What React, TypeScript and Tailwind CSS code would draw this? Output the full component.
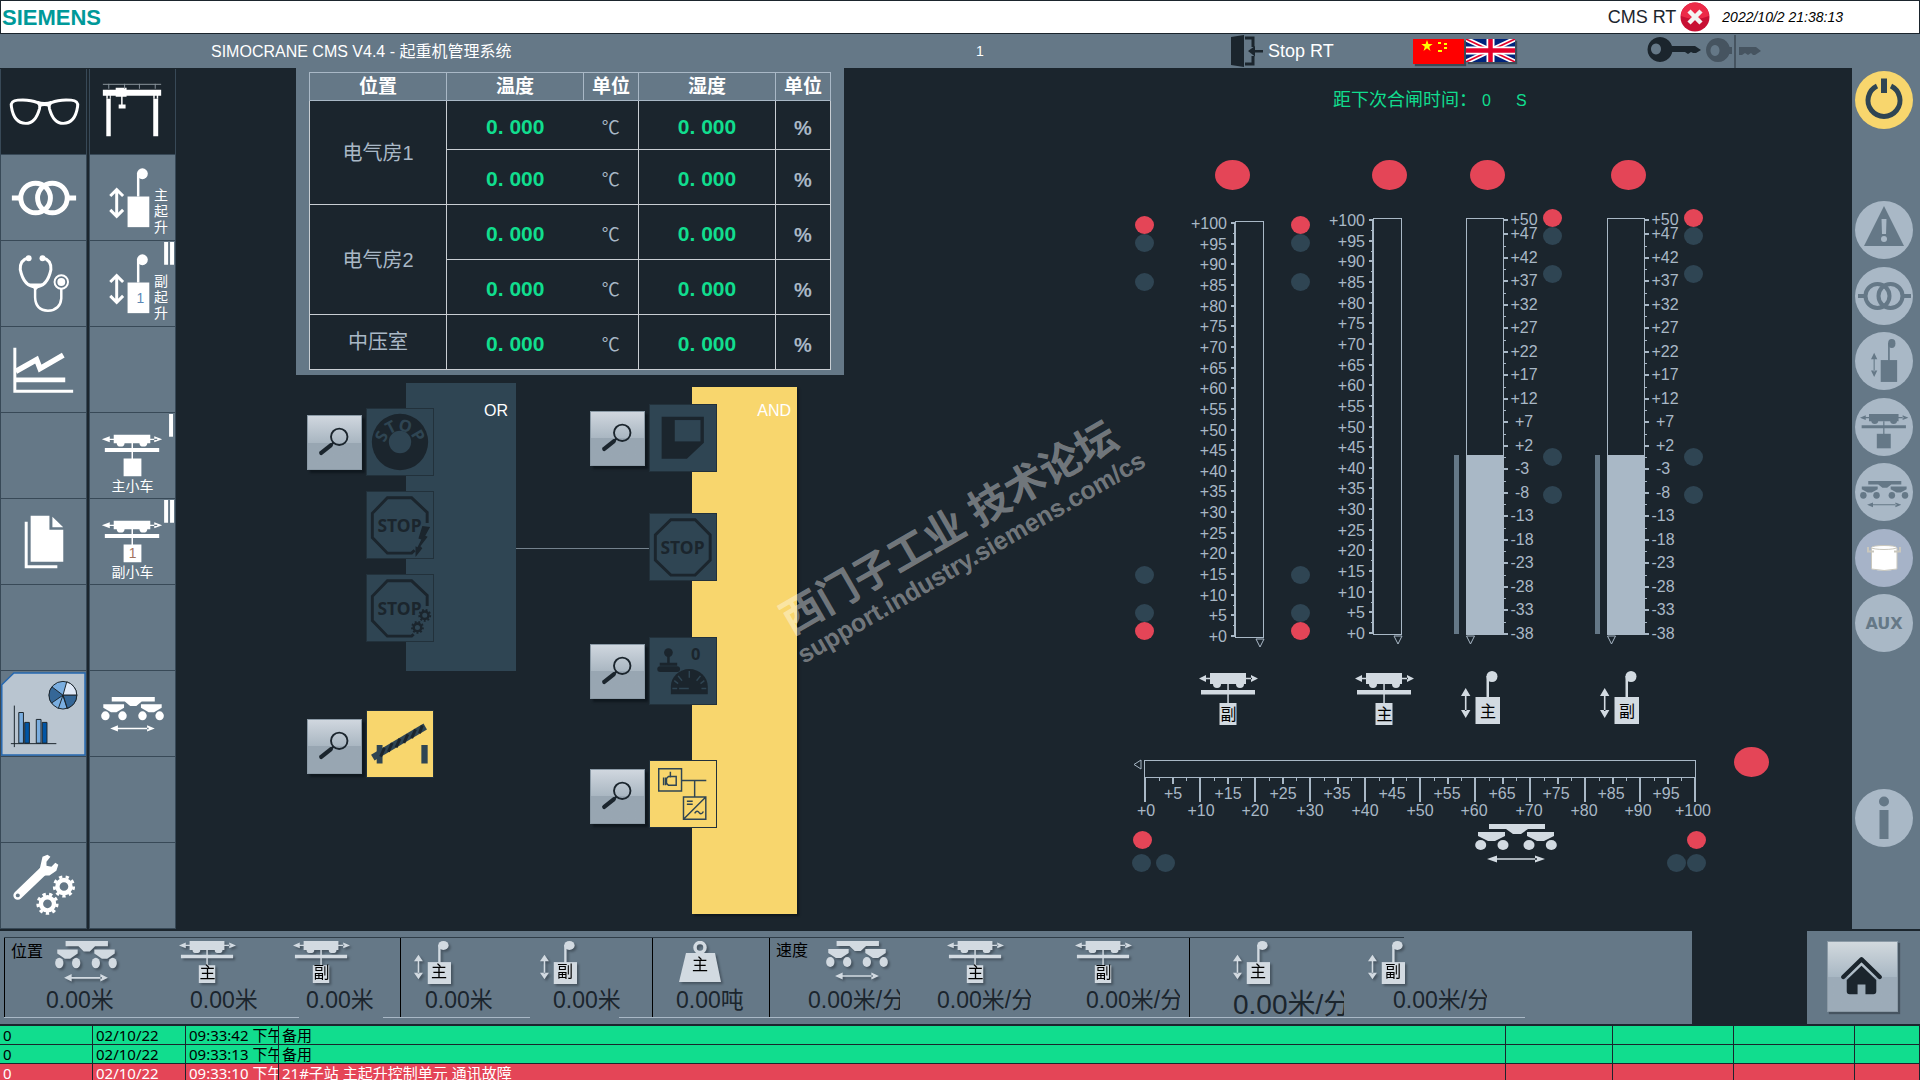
import React from "react";

const INK = "#1b252d";
const STEEL = "#657887";
const MIST = "#a9b8c6";
const PALE = "#d2dae1";
const SLATE = "#2f4553";

/* ---------- shared glyphs ---------- */

function Gear({ cx, cy, r, fill = "white" }: { cx: number; cy: number; r: number; fill?: string }) {
  return (
    <g fill="none" stroke={fill}>
      <circle cx={cx} cy={cy} r={r * 0.6} strokeWidth={r * 0.4} />
      <circle cx={cx} cy={cy} r={r * 0.88} strokeWidth={r * 0.28} pathLength={18} strokeDasharray="1 1" />
    </g>
  );
}

function TrolleyShape({ color }: { color: string }) {
  return (
    <g fill={color}>
      <path d="M11 0H47V11H11Z" />
      <circle cx="18" cy="11" r="4" />
      <circle cx="41" cy="11" r="4" />
      <path d="M0 5.5L7 2V9ZM59 5.5L52 2V9ZM6 4.7H53V6.3H6Z" />
      <path d="M2 17H56V21.5H2Z" />
      <path d="M28.3 11H29.8V31H28.3Z" />
      <path d="M20.5 30H37.5V52H20.5Z" />
    </g>
  );
}

function HoistShape({ color }: { color: string }) {
  return (
    <g fill={color}>
      <circle cx="31" cy="5.5" r="5.5" />
      <path d="M25.5 5H28V27H25.5Z" />
      <path d="M14.5 26H39V53H14.5Z" />
      <path d="M4.7 17L9.4 25H0ZM4.7 47L9.4 39H0ZM3.9 24H5.5V40H3.9Z" />
    </g>
  );
}

function GantryShape({ color }: { color: string }) {
  return (
    <g fill={color}>
      <path d="M14 0H70V5H53L46 10H38L31 5H14Z" />
      <path d="M3 8H30V12L20 17H13L3 12Z" />
      <path d="M52 8H79V12L69 17H62L52 12Z" />
      <ellipse cx="5.7" cy="21" rx="5.5" ry="5" />
      <ellipse cx="28" cy="21" rx="5.5" ry="5" />
      <ellipse cx="54" cy="21" rx="5.5" ry="5" />
      <ellipse cx="76.3" cy="21" rx="5.5" ry="5" />
      <path d="M12 35L22 31.5V38.5ZM70 35L60 31.5V38.5ZM20 34.2H62V35.8H20Z" />
    </g>
  );
}

type IconProps = { className: string; color?: string; mark?: string };

function Trolley({ className, color = PALE, mark }: IconProps) {
  return (
    <div className={`relative ${className}`}>
      <svg viewBox="0 0 59 52" preserveAspectRatio="none" className="block h-full w-full">
        <TrolleyShape color={color} />
      </svg>
      <span className="absolute inset-x-0 bottom-0 text-center text-base/5 text-black">{mark}</span>
    </div>
  );
}

function Hoist({ className, color = PALE, mark }: IconProps) {
  return (
    <div className={`relative ${className}`}>
      <svg viewBox="0 0 39 53" preserveAspectRatio="none" className="block h-full w-full">
        <HoistShape color={color} />
      </svg>
      <span className="absolute right-1 bottom-0.5 text-base/5 text-black">{mark}</span>
    </div>
  );
}

function Gantry({ className, color = PALE }: IconProps) {
  return (
    <svg viewBox="0 0 82 39" preserveAspectRatio="none" className={`block ${className}`}>
      <GantryShape color={color} />
    </svg>
  );
}

/* ---------- header ---------- */

function CloseBadge() {
  return (
    <svg viewBox="0 0 30 30" className="h-[30px] w-[30px]">
      <circle cx="15" cy="15" r="14.5" fill="#c80f33" />
      <path d="M1 14A14 13.5 0 0 1 29 14Q15 20 1 14Z" fill="#ec2a48" />
      <path d="M9 9L21 21M21 9L9 21" stroke="#f3f3f3" strokeWidth="4.5" />
    </svg>
  );
}

function Flags() {
  const star = "M0 -6L1.4 -1.9H5.7L2.2 .7L3.5 4.9L0 2.3L-3.5 4.9L-2.2 .7L-5.7 -1.9H-1.4Z";
  return (
    <>
      <button type="button" aria-label="中文" className="shadow-[2px_2px_1px_#3c4a56]">
        <svg viewBox="0 0 51 25" className="block h-[25px] w-[51px]">
          <rect width="51" height="25" fill="#ff0000" />
          <g fill="#ffff00">
            <path d={star} transform="translate(14 7)" />
            <rect x="25" y="3" width="3" height="2" />
            <rect x="31" y="4" width="3" height="2" />
            <rect x="31" y="8" width="3" height="2" />
            <rect x="25" y="11" width="4" height="2" />
          </g>
        </svg>
      </button>
      <button type="button" aria-label="English" className="ml-0.5 shadow-[2px_2px_1px_#3c4a56]">
        <svg viewBox="0 0 49 23" className="block h-[23px] w-[49px]">
          <rect width="49" height="23" fill="#00247d" />
          <path d="M0 0L49 23M49 0L0 23" stroke="white" strokeWidth="5" />
          <path d="M0 0L49 23M49 0L0 23" stroke="#e4002b" strokeWidth="1.6" />
          <path d="M24.5 0V23M0 11.5H49" stroke="white" strokeWidth="8" />
          <path d="M24.5 0V23M0 11.5H49" stroke="#e4002b" strokeWidth="4.5" />
        </svg>
      </button>
    </>
  );
}

function Keys() {
  return (
    <svg viewBox="0 0 116 34" className="h-[34px] w-[116px]">
      <g fill={INK}>
        <path fillRule="evenodd" d="M13 3a12.5 12.5 0 1 0 .01 0ZM9 9.5a5 5.5 0 1 1 -.01 0Z" />
        <path d="M22 12H48L54 16L49 19H46L44 18L41 20L38 18H22Z" />
      </g>
      <g fill="#465460">
        <path fillRule="evenodd" d="M71 4a12 12 0 1 0 .01 0ZM68 11a4.5 5.5 0 1 1 -.01 0Z" />
        <path d="M80 13H85V20H80ZM92 13H109L114 17L108 21H106L104 19L101 21L98 19L95 21H92Z" />
        <path d="M87 1H89V34H87Z" />
      </g>
    </svg>
  );
}

function Header() {
  return (
    <header className="shrink-0">
      <div className="flex h-[34px] items-center justify-between border border-[#1b252d] bg-white pr-[74px] pl-px">
        <h1 className="pt-0.5 text-[22px] leading-none font-bold text-[#009999]">SIEMENS</h1>
        <div className="flex items-center text-[#1b252d]">
          <span className="text-lg">CMS RT</span>
          <span className="ml-1">
            <CloseBadge />
          </span>
          <time className="mr-0.5 ml-3 text-sm text-black italic">2022/10/2 21:38:13</time>
        </div>
      </div>
      <div className="flex h-[34px] items-center bg-[#657887] pl-[211px] text-white">
        <h2 className="w-[765px] pt-0.5 text-base">SIMOCRANE CMS V4.4 - 起重机管理系统</h2>
        <span className="w-[255px] text-sm">1</span>
        <button type="button" className="flex w-[182px] items-center gap-[5px] text-lg">
          <svg viewBox="0 0 32 32" className="h-8 w-8">
            <path d="M0 2L13 0V32L0 30Z" fill={INK} />
            <path d="M14 3H22V12M22 21V29H14" fill="none" stroke={INK} strokeWidth="3" />
            <path d="M17 16L24 11V15H32V17.5H24V21.5Z" fill={INK} />
          </svg>
          Stop RT
        </button>
        <div className="flex w-[234px] items-start">
          <Flags />
        </div>
        <Keys />
      </div>
    </header>
  );
}

/* ---------- left navigation ---------- */

function Cell({ children, label, className = "bg-[#657887]" }: { children?: React.ReactNode; label: string; className?: string }) {
  return (
    <button type="button" aria-label={label} className={`relative block h-[86px] w-full border border-t-0 border-[#384957] ${className}`}>
      {children}
    </button>
  );
}

function Art({ children }: { children: React.ReactNode }) {
  return (
    <svg viewBox="0 0 86 86" className="absolute inset-0 h-full w-full">
      {children}
    </svg>
  );
}

function RingPair({ color }: { color: string }) {
  return (
    <g fill="none" stroke={color} strokeWidth="5">
      <circle cx="35" cy="43.5" r="15" />
      <circle cx="52" cy="43.5" r="15" />
      <path d="M11 43.5H19M68 43.5H76" />
    </g>
  );
}

function NavHoist({ text, second }: { text: string; second?: boolean }) {
  return (
    <Cell label={text}>
      <Art>
        <g fill="white">
          <circle cx="53" cy="19" r="5.5" />
          <path d="M47.5 18H50V42H47.5Z" />
          <path d="M38 42H60V73H38Z" />
          {second && <path d="M75 1H79V24H75ZM81 1H85V24H81Z" />}
        </g>
        <path d="M27 36V60M20.5 41.5L27 35L33.5 41.500M20.5 55.500L27 62L33.5 55.500" fill="none" stroke="white" strokeWidth="3" />
        {second && (
          <text x="51" y="63" textAnchor="middle" fontSize="14" fill="#5b87b5">
            1
          </text>
        )}
      </Art>
      <span className="absolute top-8 right-1.5 w-4 text-sm/4 text-white">{text}</span>
    </Cell>
  );
}

function NavTrolley({ text, second }: { text: string; second?: boolean }) {
  return (
    <Cell label={text}>
      <Art>
        <g fill="white">
          <path d="M24 22H61V30.5H24Z" />
          <circle cx="31" cy="30" r="4" />
          <circle cx="54" cy="30" r="4" />
          <path d="M12 26.5L20 23.5V29.500ZM73 26.5L65 23.5V29.500ZM18 26H68V27.200H18Z" />
          <path d="M15 35.5H70V39.5H15ZM42 30H43.5V47H42ZM34 46H52V64H34Z" />
          <path d={second ? "M75 1H79V24H75ZM81 1H85V24H81Z" : "M80 1H84V24H80Z"} />
        </g>
        {second && (
          <text x="43" y="60" textAnchor="middle" fontSize="14" fill="#a0725c">
            1
          </text>
        )}
      </Art>
      <span className="absolute inset-x-0 bottom-0.5 text-center text-sm/5 text-white">{text}</span>
    </Cell>
  );
}

function LeftNav() {
  return (
    <nav className="flex shrink-0 gap-0.5 pt-px">
      <div className="w-[87px]">
        <Cell label="监视" className="bg-[#1b252d]">
          <Art>
            <g fill="none" stroke="white" strokeWidth="3">
              <path d="M10.5 38Q9.5 32 17 31.5Q29 30.5 37 34Q40 35.5 39 40Q35 55 25 55Q13 55 10.5 38Z" />
              <path d="M77.5 38Q78.5 32 71 31.5Q59 30.5 51 34Q48 35.5 49 40Q53 55 63 55Q75 55 77.5 38Z" />
            </g>
            <path d="M37 32Q44 35 51 32L49 39Q44 36 39 39Z" fill="white" />
          </Art>
        </Cell>
        <Cell label="电源">
          <Art>
            <RingPair color="white" />
          </Art>
        </Cell>
        <Cell label="诊断">
          <Art>
            <g fill="none" stroke="white">
              <path d="M28 17Q19 19 19.5 29Q23 46 35 46.5Q47 46 50.5 29Q51 19 42 17" strokeWidth="3" />
              <path d="M34.5 47V57Q35 70 47.5 70.5Q60 70 61 58V48" strokeWidth="2.5" />
              <circle cx="61" cy="41.5" r="6.800" strokeWidth="2" />
            </g>
            <g fill="white">
              <circle cx="61" cy="41.5" r="4" />
              <circle cx="28" cy="17.5" r="3" />
              <circle cx="42" cy="17.5" r="3" />
              <path d="M28 43H42L35 50Z" />
            </g>
          </Art>
        </Cell>
        <Cell label="趋势">
          <Art>
            <path d="M14 21V65H73" fill="none" stroke="white" strokeWidth="3" />
            <path d="M15 45L36 33L39.5 42L63 28.5" fill="none" stroke="white" strokeWidth="5.5" />
            <path d="M15 53.5H65" stroke="white" strokeWidth="5" />
          </Art>
        </Cell>
        <Cell label="空白" />
        <Cell label="文档">
          <Art>
            <path d="M30 17H49V31H63V63.5H30ZM52 18L63 28.5H52ZM24 23H27V67H57V70H24Z" fill="white" />
          </Art>
        </Cell>
        <Cell label="空白" />
        <Cell label="统计">
          <svg viewBox="0 0 86 86" className="absolute inset-0 h-full w-full">
            <path d="M0.8 14L13 2H85V85H.8Z" fill="#b9c5d0" stroke="#2668b0" strokeWidth="1.5" />
            <g stroke={INK} strokeWidth="1">
              <circle cx="62.700" cy="24.5" r="14" fill="#7aaee0" />
              <path d="M62.700 24.5L66.5 11A14 14 0 0 1 76.700 24.5Z" fill="#dfe9f7" />
              <path d="M62.700 24.5H76.700A14 14 0 0 1 67 37.800Z" fill="#356797" />
              <path d="M62.700 24.5L51 32.5A14 14 0 0 1 51.5 16Z" fill="#356797" />
              <path d="M62.700 24.5L58 38M62.700 24.5L67 37.800" />
              <path d="M18 42H22.700V73H18ZM35.700 49H40.5V73H35.700Z" fill="#7aaee0" />
              <path d="M24 52H28.700V73H24ZM41.700 52H46.5V73H41.700Z" fill="#0055a5" />
              <path d="M13.5 35V77M10 73.5H56" />
            </g>
          </svg>
        </Cell>
        <Cell label="空白" />
        <Cell label="设置">
          <Art>
            <path d="M17 53L43 28" stroke="white" strokeWidth="9" strokeLinecap="round" />
            <path d="M39 27L42 14L47 12L50 14L46 19V23L51 24L55 20L58 22L56 28L49 33L43 33Z" fill="white" />
            <circle cx="17" cy="53" r="2" fill={STEEL} />
            <Gear cx={63.7} cy={44} r={11} />
            <Gear cx={47} cy={61.5} r={11} />
          </Art>
        </Cell>
      </div>
      <div className="w-[87px]">
        <Cell label="起重机" className="bg-[#1b252d]">
          <Art>
            <g fill="white">
              <path d="M13 21H72V27H13ZM26 19H37V28H26ZM16.5 30H21V68H16.5ZM64 30H69V68H64ZM31.5 28H33V36H31.5ZM29 36H36V40H29Z" />
              <path d="M16.5 26H18V30H16.5ZM20 26H21V30H20ZM64 26H65.5V30H64ZM67.5 26H69V30H67.5Z" />
            </g>
            <path d="M13 15.5H72M19 15V20M35 15V20M50 15V20M66 15V20" stroke="#8a949c" />
          </Art>
        </Cell>
        <NavHoist text="主起升" />
        <NavHoist text="副起升" second />
        <Cell label="空白" />
        <NavTrolley text="主小车" />
        <NavTrolley text="副小车" second />
        <Cell label="空白" />
        <Cell label="大车">
          <Gantry color="white" className="absolute top-[26px] left-[11px] h-[35px] w-[63px]" />
        </Cell>
        <Cell label="空白" />
        <Cell label="空白" />
      </div>
    </nav>
  );
}

/* ---------- climate table ---------- */

function ClimateTable() {
  const edge = "border border-[#c9ced3]";
  const value = "pt-1 text-[21px] leading-6 font-bold text-[#11dd8e]";
  const rows = [
    { room: "电气房1", span: 2, height: "h-[49px]" },
    { room: "", span: 0, height: "h-[55px]" },
    { room: "电气房2", span: 2, height: "h-[55px]" },
    { room: "", span: 0, height: "h-[55px]" },
    { room: "中压室", span: 1, height: "h-[55px]" },
  ];
  return (
    <div className="ml-[120px] h-[307px] w-[548px] bg-[#657887] px-[13px] pt-1">
      <table className="w-full table-fixed border-collapse bg-[#1b252d] text-center text-xl text-[#a9b8c6]">
        <colgroup>
          <col className="w-[137px]" />
          <col className="w-[137px]" />
          <col className="w-[55px]" />
          <col className="w-[137px]" />
          <col className="w-[55px]" />
        </colgroup>
        <thead>
          <tr className="h-7 bg-[#657887] text-[19px] leading-6 text-white">
            {["位置", "温度", "单位", "湿度", "单位"].map((h, i) => (
              <th key={i} scope="col" className="border border-[#a9b8c6] p-0 font-bold">
                {h}
              </th>
            ))}
          </tr>
        </thead>
        <tbody>
          {rows.map((r, i) => (
            <tr key={i} className={r.height}>
              {r.span > 0 && (
                <th scope="row" rowSpan={r.span} className={`${edge} p-0 font-normal`}>
                  {r.room}
                </th>
              )}
              <td className={`border-y border-l border-[#c9ced3] px-0 pb-0 ${value}`}>0. 000</td>
              <td className="border-y border-r border-[#c9ced3] px-0 pt-1.5 pb-0 text-lg leading-6">℃</td>
              <td className={`${edge} px-0 pb-0 ${value}`}>0. 000</td>
              <td className={`${edge} px-0 pt-1.5 pb-0 leading-6 font-bold`}>%</td>
            </tr>
          ))}
        </tbody>
      </table>
    </div>
  );
}

/* ---------- interlock diagram ---------- */

function Magnifier({ className }: { className: string }) {
  return (
    <button
      type="button"
      aria-label="详情"
      className={`absolute h-[55px] w-[55px] border border-[#8b9aa6] bg-linear-to-b from-[#d0d7df] from-0% via-[#a9b6c1] via-50% to-[#98a6b2] to-50% shadow-[3px_3px_2px_#10181e] ${className}`}
    >
      <svg viewBox="0 0 56 56" className="block h-full w-full">
        <circle cx="33" cy="22" r="8.700" fill="none" stroke={INK} strokeWidth="2" />
        <path d="M27 28L23 32" stroke={INK} strokeWidth="2.5" />
        <path d="M24 31L14 39" stroke={INK} strokeWidth="4.5" strokeLinecap="round" />
      </svg>
    </button>
  );
}

function Tile({ className, children }: { className: string; children: React.ReactNode }) {
  return (
    <div className={`absolute h-[68px] w-[68px] border border-[#22313b] ${className}`}>
      <svg viewBox="0 0 68 68" className="block h-full w-full font-['Noto_Sans']">
        {children}
      </svg>
    </div>
  );
}

function StopWord() {
  return (
    <text x="33.5" y="41" textAnchor="middle" fontSize="18" fontWeight="700" fill={INK}>
      STOP
    </text>
  );
}

function Interlocks() {
  const dark = "bg-[#2f4553]";
  const amber = "bg-[#f8d66d]";
  return (
    <div className="relative h-[556px] w-full text-base/5 text-white">
      <div className="absolute top-2 left-[230px] h-[288px] w-[110px] bg-[#2f4553] pt-[18px] pr-2 text-right">OR</div>
      <div className="absolute top-3 left-[516px] h-[527px] w-[105px] bg-[#f8d66d] pt-3.5 pr-1.5 text-right shadow-[2px_2px_2px_#10181e]">AND</div>
      <div className="absolute top-[173px] left-[340px] h-px w-[133px] bg-[#74828d]" />

      <Magnifier className="top-10 left-[131px]" />
      <Tile className={`top-[33px] left-[190px] ${dark}`}>
        <circle cx="34" cy="34" r="29" fill={INK} />
        <circle cx="34" cy="34" r="11.5" fill={SLATE} />
        <path id="stop-arc" d="M18.5 38A15.5 15.5 0 1 1 49.5 38" fill="none" />
        <text fontSize="17" fontWeight="700" fill={SLATE}>
          <textPath href="#stop-arc" startOffset="50%" textAnchor="middle">
            STOP
          </textPath>
        </text>
      </Tile>
      <Tile className={`top-[116px] left-[190px] ${dark}`}>
        <path d="M62 32V21L46 6H21L5.5 22V47L21 63H46L49 60" fill="none" stroke={INK} strokeWidth="3" />
        <StopWord />
        <path d="M57 35L65 36L60 45L62.5 46L55 56L57 58L50 67L50 56L52 57L56 49L53 48Z" fill={INK} />
      </Tile>
      <Tile className={`top-[199px] left-[190px] ${dark}`}>
        <path d="M62 32V21L46 6H21L5.5 22V47L21 63H46L48 61" fill="none" stroke={INK} strokeWidth="3" />
        <StopWord />
        <Gear cx={59.5} cy={41.5} r={6.5} fill={INK} />
        <Gear cx={52} cy={54} r={6.5} fill={INK} />
      </Tile>

      <Magnifier className="top-[344px] left-[131px]" />
      <Tile className={`top-[335px] left-[190px] ${amber}`}>
        <path d="M10 35H16V54H10ZM56 35H62.5V54H56Z" fill={SLATE} />
        <path d="M6 48L60 16" stroke={SLATE} strokeWidth="7" />
        <path d="M14 47L18 38M22 42L26 33M30 37.5L34 28.5M38 33L42 24M46 28L50 19M54 23L57 15" stroke={INK} strokeWidth="3" />
      </Tile>

      <Magnifier className="top-9 left-[414px]" />
      <Tile className={`top-[29px] left-[473px] ${dark}`}>
        <path d="M12 12H55.5V39L38 55.5H12Z" fill={INK} />
        <path d="M25.5 15.5H52V37.5H25.5Z" fill={SLATE} />
      </Tile>
      <Tile className={`top-[138px] left-[473px] ${dark}`}>
        <path d="M21.5 6H46.5L62 21.5V47.5L46.5 63H21.5L5.5 47.5V21.5Z" fill="none" stroke={INK} strokeWidth="3" />
        <StopWord />
      </Tile>
      <Magnifier className="top-[269px] left-[414px]" />
      <Tile className={`top-[262px] left-[473px] ${dark}`}>
        <g fill={INK}>
          <circle cx="19" cy="15" r="4.5" />
          <path d="M17.700 17H20.300V26H17.700ZM10 25.5H28V28.5H10Z" />
          <rect x="7.5" y="29" width="23.5" height="6" rx="3" />
          <path d="M21.5 58V50A19 18 0 0 1 59.5 50V58Z" />
        </g>
        <path d="M40.5 34V41M52 39L48 44M29 39L33 44M25 44L29 47M56 44L52 47M23 52H28M53 52H58M30 52H40" stroke={SLATE} strokeWidth="1.5" />
        <text x="47" y="23" textAnchor="middle" fontSize="17" fontWeight="700" fill={INK}>
          0
        </text>
      </Tile>
      <Magnifier className="top-[394px] left-[414px]" />
      <Tile className={`top-[385px] left-[473px] ${amber}`}>
        <g fill="none" stroke={SLATE} strokeWidth="1.5">
          <path d="M9 8H32.5V31H9ZM32.5 20H58M46 20V37M34.5 37H57.5V60H34.5ZM34.5 60L57.5 37" />
          <path d="M21 11V17M14 17V25M16 17V25M27 16V25H19L17 23V18L19 16Z" />
          <path d="M38 41.5H44M38 44.5H44M46 54Q48.5 50 50.5 53Q53 56 55 52" />
        </g>
      </Tile>
    </div>
  );
}

/* ---------- gauges ---------- */

function Lamp({ className = "" }: { className?: string }) {
  return <span className={`block h-[30px] w-[35px] shrink-0 rounded-[50%] bg-[#e44557] ${className}`} />;
}

function Dot({ on, className = "" }: { on?: boolean; className?: string }) {
  return <span className={`block h-[18px] w-[19px] shrink-0 rounded-[50%] ${on ? "bg-[#e44557]" : "bg-[#2f4553]"} ${className}`} />;
}

function TrolleyDots({ className }: { className: string }) {
  return (
    <div className={`w-[19px] shrink-0 pt-14 ${className}`}>
      <Dot on />
      <Dot />
      <Dot className="mt-[21px]" />
      <Dot className="mt-[275px]" />
      <Dot className="mt-5" />
      <Dot on />
    </div>
  );
}

function HoistDots({ className }: { className: string }) {
  return (
    <div className={`w-[19px] shrink-0 pt-[49px] ${className}`}>
      <Dot on />
      <Dot />
      <Dot className="mt-5" />
      <Dot className="mt-[165px]" />
      <Dot className="mt-5" />
    </div>
  );
}

function TrolleyGauge({ top }: { top: number }) {
  const step = 413 / 20;
  return (
    <svg viewBox="0 0 80 440" className="mt-[21px] block h-[440px] w-20" fill={MIST} fontSize="16">
      <rect x="45.5" y={top - 1.5} width="28" height="416" fill="none" stroke={MIST} />
      <path d={`M45 ${top}V${top + 413}`} stroke={MIST} strokeWidth="2" />
      {Array.from({ length: 21 }, (_, i) => {
        const y = Math.round(top + i * step);
        return (
          <g key={i}>
            <rect x="41" y={y - 1} width="4" height="2" />
            {i < 20 && <rect x="43" y={Math.round(y + step / 2)} width="2" height="1" />}
            <text x="37" y={y + 6} textAnchor="end">{`+${100 - i * 5}`}</text>
          </g>
        );
      })}
      <path d={`M66 ${top + 416}h8l-4 8Z`} fill="none" stroke={MIST} />
    </svg>
  );
}

function HoistGauge() {
  const marks = [50, 47, 42, 37, 32, 27, 22, 17, 12, 7, 2, -3, -8, -13, -18, -23, -28, -33, -38];
  const at = (v: number) => Math.round(9 + (50 - v) * 4.7);
  return (
    <svg viewBox="0 0 90 440" className="mt-[21px] block h-[440px] w-[90px]" fill={MIST} fontSize="16">
      <rect x="4" y="244" width="5" height="179" fill={STEEL} />
      <rect x="16.5" y="7.5" width="37" height="416" fill="none" stroke={MIST} />
      <rect x="16" y="244" width="38" height="180" />
      {marks.map((v, i) => (
        <g key={v}>
          <rect x="54" y={at(v) - 1} width="4" height="2" />
          {i > 0 && v > -38 && <rect x="54" y={at(v - 2.5)} width="2" height="1" />}
          <text x={v > 0 ? 74 : 72} y={at(v) + 5} textAnchor="middle">
            {v > 0 ? `+${v}` : v}
          </text>
        </g>
      ))}
      <path d="M16.5 425h8l-4 8Z" fill="none" stroke={MIST} />
    </svg>
  );
}

function TravelGauge() {
  return (
    <svg viewBox="0 0 594 66" className="mt-[9px] block h-[66px] w-[594px] shrink-0" fill={MIST} fontSize="16">
      <path d="M16 4L9 8.5L16 13Z" fill="none" stroke={MIST} />
      <rect x="19.5" y="4.5" width="551" height="17" fill="none" stroke={MIST} />
      {Array.from({ length: 41 }, (_, i) => {
        const x = Math.round(20 + (i * 550) / 40);
        const len = i % 4 === 0 ? 24 : i % 2 === 0 ? 6 : 3;
        return <rect key={i} x={i % 2 ? x : x - 1} y="22" width={i % 2 ? 1 : 2} height={len} />;
      })}
      {Array.from({ length: 21 }, (_, i) => (
        <text key={i} x={Math.round(21 + i * 27.35)} y={i % 2 ? 43 : 60} textAnchor="middle">{`+${i * 5}`}</text>
      ))}
    </svg>
  );
}

function Gauges() {
  return (
    <section className="min-w-[690px]">
      <p className="flex items-center pt-[19px] pl-[233px] text-lg/6 text-[#11dd8e]">
        距下次合闸时间：
        <output className="ml-[5px] w-[34px] pt-0.5 text-base">0</output>
        <span className="pt-0.5 text-base">S</span>
      </p>
      <div className="flex pt-[47px] pl-[35px]">
        <TrolleyDots className="mr-9" />
        <div className="w-20 shrink-0">
          <Lamp className="ml-[25px]" />
          <TrolleyGauge top={12} />
          <Trolley mark="副" className="mt-[22px] ml-[9px] h-[52px] w-[59px]" />
        </div>
        <TrolleyDots className="mr-[18px] ml-[21px]" />
        <div className="w-[122px] shrink-0">
          <Lamp className="ml-11" />
          <TrolleyGauge top={9} />
          <Trolley mark="主" className="mt-[22px] ml-[27px] h-[52px] w-[59px]" />
        </div>
        <div className="w-[93px] shrink-0">
          <Lamp className="ml-5" />
          <HoistGauge />
          <Hoist mark="主" className="mt-5 ml-[11px] h-[53px] w-[39px]" />
        </div>
        <HoistDots className="mr-[29px]" />
        <div className="w-[93px] shrink-0">
          <Lamp className="ml-5" />
          <HoistGauge />
          <Hoist mark="副" className="mt-5 ml-[9px] h-[53px] w-[39px]" />
        </div>
        <HoistDots className="" />
      </div>
      <div className="flex pt-[22px] pl-[25px]">
        <TravelGauge />
        <Lamp className="ml-[15px]" />
      </div>
      <div className="flex pt-0.5 pl-8">
        <div className="pt-[7px]">
          <Dot on className="ml-px" />
          <div className="mt-[5px] flex gap-[5px]">
            <Dot />
            <Dot />
          </div>
        </div>
        <Gantry className="mr-[110px] ml-[300px] h-[39px] w-[82px]" />
        <div className="flex flex-col items-end pt-[7px]">
          <Dot on />
          <div className="mt-[5px] flex gap-px">
            <Dot />
            <Dot />
          </div>
        </div>
      </div>
    </section>
  );
}

/* ---------- right status rail ---------- */

function Round({ label, className = "bg-[#a9b8c6]", children }: { label: string; className?: string; children: React.ReactNode }) {
  return (
    <button type="button" aria-label={label} className={`block h-[58px] w-[58px] shrink-0 rounded-full ${className}`}>
      <svg viewBox="0 0 58 58" className="block h-full w-full">
        {children}
      </svg>
    </button>
  );
}

function StatusRail() {
  return (
    <aside className="mb-0.5 w-[68px] shrink-0 bg-[#657887] pt-[3px] pl-[3px]">
      <Round label="电源" className="bg-[#f8d66d]">
        <path d="M22 15A16 16 0 1 0 36 15" fill="none" stroke={SLATE} strokeWidth="5" />
        <path d="M26 7.5H32V22H26Z" fill={SLATE} />
      </Round>
      <div className="mt-[72px] mb-[137px] flex h-[451px] flex-col justify-between">
        <Round label="报警">
          <path d="M29 5L49 45H9Z" fill={STEEL} />
          <path d="M26.5 18H31.5L31 33H27Z" fill={MIST} />
          <circle cx="29" cy="38" r="3" fill={MIST} />
        </Round>
        <Round label="电源状态">
          <g fill="none" stroke={STEEL} strokeWidth="4">
            <circle cx="22.5" cy="29" r="12" />
            <circle cx="35.5" cy="29" r="12" />
            <path d="M3 29H10M48 29H56" />
          </g>
        </Round>
        <Round label="起升状态">
          <g transform="translate(16 7) scale(.67 .81)">
            <HoistShape color={STEEL} />
          </g>
        </Round>
        <Round label="小车状态">
          <g transform="translate(5 16) scale(.82 .66)">
            <TrolleyShape color={STEEL} />
          </g>
        </Round>
        <Round label="大车状态">
          <g transform="translate(5 18) scale(.59 .68)">
            <GantryShape color={STEEL} />
          </g>
        </Round>
        <Round label="吊具" className="bg-[#a6b3c8]">
          <path d="M16.5 19H42V40Q29 43 16.5 40Z" fill="white" stroke="#c9c7bd" />
          <ellipse cx="29" cy="18.5" rx="12.5" ry="2" fill="white" stroke="#c9c7bd" />
          <path d="M13 18V22.5H19M45 18V22.5H39" fill="none" stroke="#c9c7bd" strokeWidth="2" />
        </Round>
        <Round label="AUX">
          <text x="29" y="35" textAnchor="middle" fontSize="16" fontWeight="700" fill={STEEL} className="font-['DejaVu_Sans']">
            AUX
          </text>
        </Round>
      </div>
      <Round label="信息">
        <circle cx="29" cy="12.5" r="5" fill={STEEL} />
        <path d="M24.5 21H33.5V50H24.5Z" fill={STEEL} />
      </Round>
    </aside>
  );
}

/* ---------- bottom bar ---------- */

function Readout({ icon, value, className, valueClass = "ml-0" }: { icon: React.ReactNode; value: string; className: string; valueClass?: string }) {
  return (
    <div className={`shrink-0 pt-1 ${className}`}>
      <div className="h-[45px]">{icon}</div>
      <output className={`block overflow-hidden text-[23px] leading-7 whitespace-nowrap text-[#1b252d] ${valueClass}`}>{value}</output>
    </div>
  );
}

function BottomBar() {
  const trolley = "h-[42px] w-[57px]";
  const hoist = "h-[43px] w-[37px]";
  const shade = "drop-shadow-[2px_2px_1px_#465460]";
  const group = "relative flex shrink-0 border-l border-black";
  const rule = "absolute bottom-0 h-px bg-[#a9b8c6]";
  return (
    <footer className="flex shrink-0 justify-between pb-0.5">
      <section className="flex h-[93px] w-[1692px] bg-[#657887] pt-1.5 pl-1">
        <div className="relative flex h-[81px]">
          <div className={`${group} w-[396px] pl-[41px]`}>
            <span className="absolute top-[3px] left-1.5 text-base text-black">位置</span>
            <Readout className="w-[133px]" icon={<Gantry className={`ml-[9px] h-[41px] w-[62px] ${shade}`} />} value="0.00米" />
            <Readout className="w-[114px]" icon={<Trolley mark="主" className={`${trolley} ${shade}`} />} value="0.00米" valueClass="ml-[11px]" />
            <Readout className="w-[100px]" icon={<Trolley mark="副" className={`${trolley} ${shade}`} />} value="0.00米" valueClass="ml-[13px]" />
          </div>
          <div className={`${group} w-[252px] pl-[13px]`}>
            <Readout className="w-[126px]" icon={<Hoist mark="主" className={`${hoist} ${shade}`} />} value="0.00米" valueClass="ml-[11px]" />
            <Readout className="w-[100px]" icon={<Hoist mark="副" className={`${hoist} ${shade}`} />} value="0.00米" valueClass="ml-[13px]" />
          </div>
          <div className={`${group} w-[117px] pl-[23px]`}>
            <Readout
              className="w-[90px]"
              icon={
                <div className={`relative ml-[3px] h-[41px] w-[42px] ${shade}`}>
                  <svg viewBox="0 0 42 41" className="block h-full w-full">
                    <path d="M7 12H36L42 41H0Z" fill={PALE} />
                    <circle cx="21" cy="6.5" r="5" fill="none" stroke={PALE} strokeWidth="3.5" />
                  </svg>
                  <span className="absolute inset-x-0 top-3.5 text-center text-base/5 text-black">主</span>
                </div>
              }
              value="0.00吨"
            />
          </div>
          <div className={`${group} w-[420px] pl-[38px]`}>
            <span className="absolute top-0.5 left-1.5 text-base text-black">速度</span>
            <Readout className="w-[129px]" icon={<Gantry className={`ml-[18px] h-[39px] w-[62px] ${shade}`} />} value="0.00米/分" valueClass="w-[92px]" />
            <Readout className="w-[138px]" icon={<Trolley mark="主" className={`ml-2.5 ${trolley} ${shade}`} />} value="0.00米/分" valueClass="w-[94px]" />
            <Readout className="w-[110px]" icon={<Trolley mark="副" className={`${trolley} ${shade}`} />} value="0.00米/分" valueClass="ml-[11px] w-[94px]" />
          </div>
          <div className={`${group} w-[336px] pl-[43px]`}>
            <Readout
              className="w-[135px]"
              icon={<Hoist mark="主" className={`${hoist} ${shade}`} />}
              value="0.00米/分"
              valueClass="w-[111px] text-[28px]! leading-[38px]!"
            />
            <Readout className="w-[130px]" icon={<Hoist mark="副" className={`${hoist} ${shade}`} />} value="0.00米/分" valueClass="ml-[25px] w-[94px]" />
          </div>
          <i className="absolute top-0 right-[121px] left-0 h-px bg-[#2f3d48]" />
          <i className={`${rule} left-0 w-[295px]`} />
          <i className={`${rule} left-[379px] w-[147px]`} />
          <i className={`${rule} right-0 left-[615px]`} />
        </div>
      </section>
      <div className="h-[93px] w-[113px] bg-[#657887] pt-2.5 pl-5">
        <button
          type="button"
          aria-label="主页"
          className="block h-[71px] w-[71px] border border-[#8b9aa6] bg-linear-to-b from-[#d2d9de] from-0% via-[#a9b8c4] via-50% to-[#9cabb8] to-50% shadow-[2px_2px_1px_#465460]"
        >
          <svg viewBox="0 0 70 70" className="block h-full w-full">
            <path d="M15.5 35.5L34 17.5L52.5 35.5" fill="none" stroke={INK} strokeWidth="4.5" strokeLinecap="round" strokeLinejoin="round" />
            <path d="M34 24L49 38.5V50Q49 53 46 53H38V43H30V53H22Q19 53 19 50V38.5Z" fill={INK} />
          </svg>
        </button>
      </div>
    </footer>
  );
}

/* ---------- alarm list ---------- */

function Alarms() {
  const rows = [
    { time: "09:33:42 下午", text: "备用", tone: "bg-[#11dd8e] text-black" },
    { time: "09:33:13 下午", text: "备用", tone: "bg-[#11dd8e] text-black" },
    { time: "09:33:10 下午", text: "21#子站 主起升控制单元 通讯故障", tone: "bg-[#e44557] text-white" },
  ];
  const cell = "h-[19px] overflow-hidden border-r border-b border-[#1b252d] p-0 pl-[3px] whitespace-nowrap";
  return (
    <table className="w-full shrink-0 table-fixed border-separate border-spacing-0 text-[15px] leading-[18px] font-['Noto_Sans','Noto_Sans_CJK_SC',sans-serif]">
      <colgroup>
        <col className="w-[93px]" />
        <col className="w-[93px]" />
        <col className="w-[93px]" />
        <col />
        <col className="w-[107px]" />
        <col className="w-[121px]" />
        <col className="w-[121px]" />
        <col className="w-[65px]" />
      </colgroup>
      <tbody>
        {rows.map((r) => (
          <tr key={r.time} className={r.tone}>
            <td className={cell}>0</td>
            <td className={cell}>02/10/22</td>
            <td className={cell}>{r.time}</td>
            <td className={cell}>{r.text}</td>
            <td className={cell} />
            <td className={cell} />
            <td className={cell} />
            <td className={cell} />
          </tr>
        ))}
      </tbody>
    </table>
  );
}

export default function App() {
  return (
    <div className="flex h-screen flex-col overflow-hidden bg-[#1b252d] font-['Liberation_Sans','Noto_Sans_CJK_SC',sans-serif]">
      <Header />
      <main className="relative flex shrink-0">
        <LeftNav />
        <div className="grid grow grid-cols-[924fr_752fr]">
          <section className="min-w-[680px]">
            <ClimateTable />
            <Interlocks />
          </section>
          <Gauges />
        </div>
        <StatusRail />
        <div className="pointer-events-none absolute top-[470px] left-[960px] -translate-x-1/2 -translate-y-1/2 -rotate-30 whitespace-nowrap text-white/40">
          <p className="pl-1 text-[41px] leading-11 font-bold">西门子工业 技术论坛</p>
          <p className="text-[25px] leading-7 font-bold">support.industry.siemens.com/cs</p>
        </div>
      </main>
      <BottomBar />
      <Alarms />
    </div>
  );
}
